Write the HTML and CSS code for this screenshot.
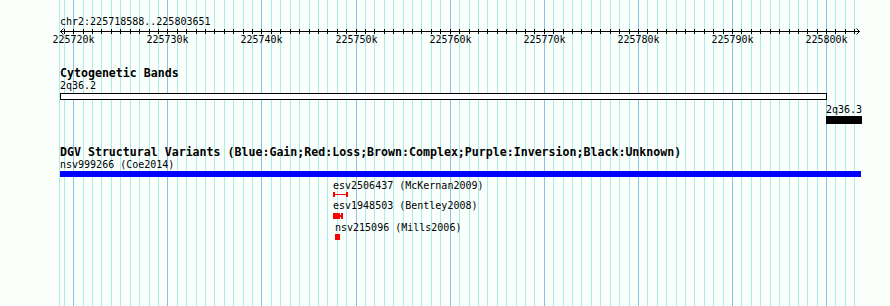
FILE: index.html
```html
<!DOCTYPE html>
<html lang="en">
<head>
    <meta charset="UTF-8">
    <title>chr2:225718588..225803651</title>
    <link rel="stylesheet" href="styles.css">
</head>
<body>
    <div class="browser">
        <!-- 1 kb grid, every 10 kb darker -->
        <svg class="grid" width="890" height="306" shape-rendering="crispEdges">
            <path class="minor" d="M59.5 0v306M64.5 0v306M83.5 0v306M92.5 0v306M101.5 0v306M111.5 0v306M120.5 0v306M130.5 0v306M139.5 0v306M149.5 0v306M158.5 0v306M177.5 0v306M186.5 0v306M196.5 0v306M205.5 0v306M214.5 0v306M224.5 0v306M233.5 0v306M243.5 0v306M252.5 0v306M271.5 0v306M280.5 0v306M290.5 0v306M299.5 0v306M309.5 0v306M318.5 0v306M327.5 0v306M337.5 0v306M346.5 0v306M365.5 0v306M374.5 0v306M384.5 0v306M393.5 0v306M403.5 0v306M412.5 0v306M421.5 0v306M431.5 0v306M440.5 0v306M459.5 0v306M469.5 0v306M478.5 0v306M487.5 0v306M497.5 0v306M506.5 0v306M516.5 0v306M525.5 0v306M534.5 0v306M553.5 0v306M563.5 0v306M572.5 0v306M581.5 0v306M591.5 0v306M600.5 0v306M610.5 0v306M619.5 0v306M629.5 0v306M647.5 0v306M657.5 0v306M666.5 0v306M676.5 0v306M685.5 0v306M694.5 0v306M704.5 0v306M713.5 0v306M723.5 0v306M741.5 0v306M751.5 0v306M760.5 0v306M770.5 0v306M779.5 0v306M789.5 0v306M798.5 0v306M807.5 0v306M817.5 0v306M835.5 0v306M845.5 0v306M854.5 0v306"/>
            <path class="major" d="M73.5 0v306M167.5 0v306M261.5 0v306M356.5 0v306M450.5 0v306M544.5 0v306M638.5 0v306M732.5 0v306M826.5 0v306"/>
        </svg>

        <svg class="ruler" width="890" height="66">
            <text x="60" y="25">chr2:225718588..225803651</text>
            <g shape-rendering="crispEdges">
                <rect x="60" y="31" width="800" height="1"/>
                <path class="ticks" d="M64.5 29v5M73.5 29v5M83.5 29v5M92.5 29v5M101.5 29v5M111.5 29v5M120.5 29v5M130.5 29v5M139.5 29v5M149.5 29v5M158.5 29v5M167.5 29v5M177.5 29v5M186.5 29v5M196.5 29v5M205.5 29v5M214.5 29v5M224.5 29v5M233.5 29v5M243.5 29v5M252.5 29v5M261.5 29v5M271.5 29v5M280.5 29v5M290.5 29v5M299.5 29v5M309.5 29v5M318.5 29v5M327.5 29v5M337.5 29v5M346.5 29v5M356.5 29v5M365.5 29v5M374.5 29v5M384.5 29v5M393.5 29v5M403.5 29v5M412.5 29v5M421.5 29v5M431.5 29v5M440.5 29v5M450.5 29v5M459.5 29v5M469.5 29v5M478.5 29v5M487.5 29v5M497.5 29v5M506.5 29v5M516.5 29v5M525.5 29v5M534.5 29v5M544.5 29v5M553.5 29v5M563.5 29v5M572.5 29v5M581.5 29v5M591.5 29v5M600.5 29v5M610.5 29v5M619.5 29v5M629.5 29v5M638.5 29v5M647.5 29v5M657.5 29v5M666.5 29v5M676.5 29v5M685.5 29v5M694.5 29v5M704.5 29v5M713.5 29v5M723.5 29v5M732.5 29v5M741.5 29v5M751.5 29v5M760.5 29v5M770.5 29v5M779.5 29v5M789.5 29v5M798.5 29v5M807.5 29v5M817.5 29v5M826.5 29v5M835.5 29v5M845.5 29v5M854.5 29v5"/>
            </g>
            <path class="arrow" d="M63.5 28.5L60.5 31.5L63.5 34.5M856.5 28.5L859.5 31.5L856.5 34.5"/>
            <g class="scale-labels">
                <text x="73.5" y="43">225720k</text>
                <text x="167.5" y="43">225730k</text>
                <text x="261.5" y="43">225740k</text>
                <text x="356.5" y="43">225750k</text>
                <text x="450.5" y="43">225760k</text>
                <text x="544.5" y="43">225770k</text>
                <text x="638.5" y="43">225780k</text>
                <text x="732.5" y="43">225790k</text>
                <text x="826.5" y="43">225800k</text>
            </g>
        </svg>

        <div class="track">
            <h2 class="track-title">Cytogenetic Bands</h2>
            <svg width="890" height="65">
                <text x="60" y="9">2q36.2</text>
                <rect class="band" x="60.5" y="13.5" width="766" height="6"/>
                <text x="826" y="33">2q36.3</text>
                <rect x="826" y="36" width="36" height="8"/>
            </svg>
        </div>

        <div class="track">
            <h2 class="track-title">DGV Structural Variants (Blue:Gain;Red:Loss;Brown:Complex;Purple:Inversion;Black:Unknown)</h2>
            <svg width="890" height="90" shape-rendering="crispEdges">
                <text x="60" y="9">nsv999266 (Coe2014)</text>
                <rect class="gain" x="60" y="12" width="801" height="6"/>

                <text x="333" y="30">esv2506437 (McKernan2009)</text>
                <g class="loss">
                    <rect x="333" y="33" width="2" height="5"/>
                    <rect x="335" y="35" width="11" height="1"/>
                    <rect x="346" y="33" width="2" height="5"/>
                </g>

                <text x="333" y="50">esv1948503 (Bentley2008)</text>
                <g class="loss">
                    <rect x="333" y="54" width="7" height="6"/>
                    <rect x="340" y="56" width="1" height="2"/>
                    <rect x="341" y="54" width="2" height="6"/>
                </g>

                <text x="335" y="72">nsv215096 (Mills2006)</text>
                <rect class="loss" x="335" y="75" width="5" height="6"/>
            </svg>
        </div>
    </div>
</body>
</html>
```

FILE: styles.css
```css
*{
    margin: 0;
    padding: 0;
}
body{
    background-color: #fff;
}
.browser{
    width: 890px;
    height: 306px;
    position: relative;
    z-index: 0;
    overflow: hidden;
    background-color: #fbfffb;
}
.grid{
    position: absolute;
    top: 0;
    left: 0;
    z-index: -1;
}
.grid .minor{
    stroke: #aaecf0;
    stroke-width: 1;
}
.grid .major{
    stroke: #88c4ea;
    stroke-width: 1;
}
svg{
    display: block;
}
svg text{
    font-family: "DejaVu Sans Mono", "Liberation Mono", monospace;
    font-size: 10px;
    fill: #000;
}
.ticks,
.arrow{
    stroke: #000;
    stroke-width: 1;
    fill: none;
}
.scale-labels text{
    text-anchor: middle;
}
.track-title{
    padding-left: 60px;
    height: 14px;
    font-family: "DejaVu Sans Mono", "Liberation Mono", monospace;
    font-size: 11.6px;
    font-weight: bold;
    line-height: 14px;
    color: #000;
    white-space: nowrap;
}
.band{
    fill: #fff;
    stroke: #000;
    stroke-width: 1;
}
.gain{
    fill: #0000ff;
}
.loss{
    fill: #ff0000;
}
```
